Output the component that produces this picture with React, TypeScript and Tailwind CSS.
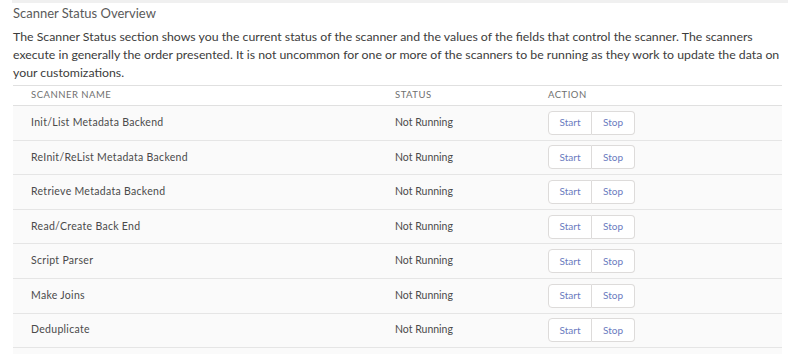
const scanners = [
  "Init/List Metadata Backend",
  "ReInit/ReList Metadata Backend",
  "Retrieve Metadata Backend",
  "Read/Create Back End",
  "Script Parser",
  "Make Joins",
  "Deduplicate",
];

const ScannerRow = ({ name }: { name: string }) => {
  return (
    <div className="flex items-center h-[34.6px] border-b border-[#e5e5e5] bg-[#fafafa]">
      <div className="w-[364px] pl-[18px] text-[10.5px] tracking-[0.3px] text-[#4a4a4a]">{name}</div>
      <div className="w-[153px] pl-[18px] text-[10.5px] text-[#4a4a4a]">Not Running</div>
      <div className="pl-[18px] flex">
        <button className="w-[44px] h-[24px] text-[10px] text-[#6a7bc0] bg-white border border-[#dddbda] rounded-l-[4px]">
          Start
        </button>
        <button className="w-[43px] h-[24px] text-[10px] text-[#6a7bc0] bg-white border border-l-0 border-[#dddbda] rounded-r-[4px]">
          Stop
        </button>
      </div>
    </div>
  );
};

export default function App() {
  return (
    <div className="w-[800px] h-[354px] bg-white overflow-hidden font-['Lato',sans-serif]">
      <div className="mx-[12px] h-[3px] bg-[#f0f0f0]" />
      <div className="pl-[13px] pr-[12px]">
        <h2 className="mt-[1px] text-[13px] leading-[18px] text-[#5a5a5a]">Scanner Status Overview</h2>
        <p className="mt-[6px] text-[12.3px] leading-[18px] text-[#3c3c3c]">
          The Scanner Status section shows you the current status of the scanner and the values of the fields that
          control the scanner. The scanners execute in generally the order presented. It is not uncommon for one or
          more of the scanners to be running as they work to update the data on your customizations.
        </p>
        <div className="mt-[3px] w-[769px]">
          <div className="flex items-center h-[21px] border-t border-b border-[#e0e0e0] text-[9.5px] tracking-[0.5px] text-[#707070] uppercase">
            <div className="w-[364px] pl-[18px]">Scanner Name</div>
            <div className="w-[153px] pl-[18px]">Status</div>
            <div className="pl-[18px]">Action</div>
          </div>
          {scanners.map((s) => (
            <ScannerRow key={s} name={s} />
          ))}
          <div className="h-[10px] bg-[#fafafa]" />
        </div>
      </div>
    </div>
  );
}
